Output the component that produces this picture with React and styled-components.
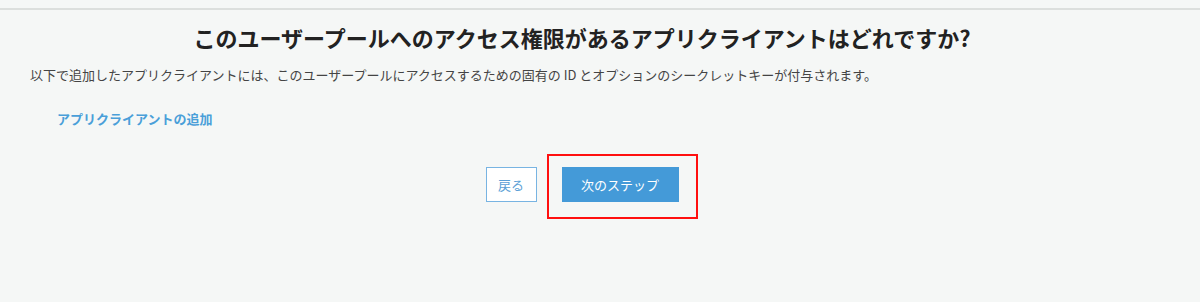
import styled, { createGlobalStyle } from "styled-components";

const GlobalStyle = createGlobalStyle`
  html, body {
    margin: 0;
    padding: 0;
    background-color: #f5f7f6;
    font-family: "Noto Sans CJK JP", "Noto Sans", sans-serif;
  }
`;

const Page = styled.div`
  height: 302px;
  background-color: #f5f7f6;
  padding-top: 8px;
  box-sizing: border-box;
`;

const Divider = styled.div`
  height: 2px;
  background-color: #dcdfdd;
`;

const Content = styled.div`
  padding: 0 66px 0 30px;
`;

const Title = styled.h2`
  margin: 12px 0 0;
  text-align: center;
  font-size: 22px;
  line-height: 30px;
  font-weight: 700;
  color: #222;
`;

const Description = styled.p`
  margin: 14px 0 0;
  font-size: 13px;
  line-height: 18px;
  color: #444;
`;

const AddLink = styled.a`
  display: inline-block;
  margin: 26px 0 0 27px;
  font-size: 13px;
  line-height: 18px;
  font-weight: 700;
  color: #4a9fd9;
  text-decoration: none;
  cursor: pointer;
`;

const Actions = styled.div`
  display: flex;
  justify-content: center;
  gap: 25px;
  margin-top: 38px;
`;

const Button = styled.button`
  height: 35px;
  width: ${(p) => (p.$primary ? "117px" : "51px")};
  padding: 0;
  box-sizing: border-box;
  font-family: inherit;
  font-size: 13px;
  border: 1px solid ${(p) => (p.$primary ? "#449ad8" : "#78b4e2")};
  background-color: ${(p) => (p.$primary ? "#449ad8" : "#fff")};
  color: ${(p) => (p.$primary ? "#fff" : "#5b9fd6")};
  cursor: pointer;
`;

const Highlight = styled.div`
  position: relative;

  &::after {
    content: "";
    position: absolute;
    left: -15px;
    right: -19px;
    top: -13px;
    bottom: -17px;
    border: 2px solid #ff1010;
    pointer-events: none;
  }
`;

const App = () => {
  return (
    <>
      <GlobalStyle />
      <Page>
        <Divider />
        <Content>
          <Title>このユーザープールへのアクセス権限があるアプリクライアントはどれですか?</Title>
          <Description>
            以下で追加したアプリクライアントには、このユーザープールにアクセスするための固有の ID とオプションのシークレットキーが付与されます。
          </Description>
          <AddLink>アプリクライアントの追加</AddLink>
          <Actions>
            <Button>戻る</Button>
            <Highlight>
              <Button $primary>次のステップ</Button>
            </Highlight>
          </Actions>
        </Content>
      </Page>
    </>
  );
};

export default App;
